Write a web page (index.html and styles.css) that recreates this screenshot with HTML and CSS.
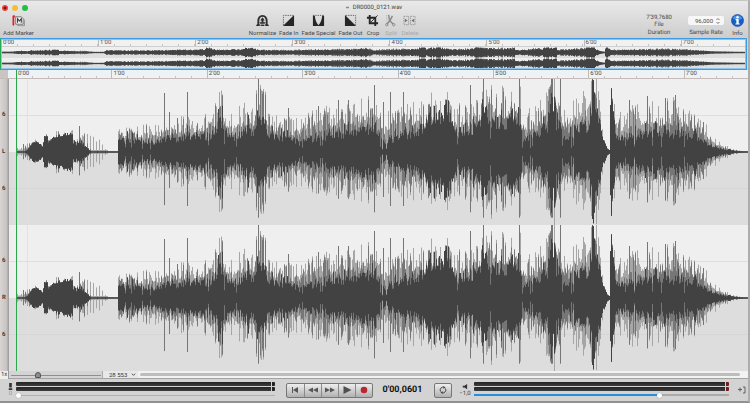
FILE: index.html
```html
<!DOCTYPE html>
<html lang="en">
<head>
<meta charset="utf-8">
<title>DR0000_0121.wav</title>
<link rel="stylesheet" href="styles.css">
</head>
<body>
<div class="window">
  <header class="header">
    <div class="titlebar">
      <div class="lights">
        <button class="light close" aria-label="Close"></button>
        <button class="light minimise" aria-label="Minimise"></button>
        <button class="light expand" aria-label="Zoom"></button>
      </div>
      <h1 class="title"><svg class="doc" viewBox="0 0 4 4"><path d="M0 1h4v2H0z" fill="#888"/></svg>DR0000_0121.wav</h1>
    </div>
    <div class="toolbar">
      <button class="tool">
        <svg viewBox="0 0 14 14"><path d="M4 3h6l2 2v6H4z" fill="#f2f2f2" stroke="#555" stroke-width=".8"/><path d="M5.500 12.500h8V6" fill="none" stroke="#777" stroke-width=".7"/><path d="M6 9.500V5l2 2.500L10 5v4.500" fill="none" stroke="#333" stroke-width="1.100"/><path d="M1 2h2v1H2v9H1z" fill="#d81e2a" stroke="#d81e2a" stroke-width=".8"/></svg>
        <span>Add Marker</span>
      </button>
      <div class="space"></div>
      <div class="tools">
        <button class="tool"><svg viewBox="0 0 14 14"><path d="M2.500 13V8C2.500 4 4.500 2 7 2s4.500 2 4.500 6v5" fill="none" stroke="#2e2e2e" stroke-width="2" /><path d="M1 11h3v2H0zM10 11h3l1 2h-4z" fill="#2e2e2e"/><path d="M7 3.500 9.500 7H8v2h2.500L9 11v2H5v-2L3.500 9H6V7H4.500z" fill="#2e2e2e"/><path d="M4.500 11h5" stroke="#e5e5e5" stroke-width=".8"/></svg><span>Normalize</span></button>
        <button class="tool"><svg viewBox="0 0 14 14"><path d="M1.500 12V1.500H12" fill="none" stroke="#555" stroke-width=".9" stroke-dasharray="1.500 1"/><path d="M13 1v12H1z" fill="#262626"/></svg><span>Fade In</span></button>
        <button class="tool"><svg viewBox="0 0 14 14"><path d="M1 1.500h12" stroke="#555" stroke-width=".9" stroke-dasharray="1.500 1"/><path d="M1 2h2c.5 5 2 8 4 10 2-2 3.500-5 4-10h2v11H1z" fill="#262626"/></svg><span>Fade Special</span></button>
        <button class="tool"><svg viewBox="0 0 14 14"><path d="M2 1.500h10.500V12" fill="none" stroke="#555" stroke-width=".9" stroke-dasharray="1.500 1"/><path d="M1 1l12 12H1z" fill="#262626"/></svg><span>Fade Out</span></button>
        <button class="tool"><svg viewBox="0 0 14 14"><path d="M4 1v9h9M1 4h9v9" fill="none" stroke="#262626" stroke-width="2"/><path d="M4.500 9.500l8-8" stroke="#262626" stroke-width="1"/></svg><span>Crop</span></button>
        <button class="tool" disabled><svg viewBox="0 0 14 14"><path d="M5 1l1 6 4 4M9 2L6.500 7 3 11" fill="none" stroke="#777" stroke-width="1.600"/><circle cx="3" cy="11.500" r="1.300" fill="none" stroke="#777"/><circle cx="10.500" cy="11.500" r="1.300" fill="none" stroke="#777"/><path d="M3 1v8" stroke="#999" stroke-width=".8" stroke-dasharray="1 1"/></svg><span>Split</span></button>
        <button class="tool" disabled><svg viewBox="0 0 14 14"><path d="M1 2.500h5v9H1zM8 2.500h5v9H8z" fill="none" stroke="#777" stroke-width=".9" stroke-dasharray="1.500 1"/><path d="M2 5l3 2-3 2zM12 5L9 7l3 2z" fill="#555"/></svg><span>Delete</span></button>
      </div>
      <div class="space wide"></div>
      <div class="tool"><div class="duration">7'39,7680<br>File</div><span>Duration</span></div>
      <div class="tool rate">
        <div class="field"><select id="rate"><option>96,000</option></select><svg class="step" viewBox="0 0 6 8"><path d="M1.500 3 3 1.500 4.500 3M1.500 5 3 6.500 4.500 5" fill="none" stroke="#555" stroke-width=".8"/></svg></div>
        <label for="rate">Sample Rate</label>
      </div>
      <button class="tool"><svg viewBox="0 0 14 14"><circle cx="7" cy="7" r="6.500" fill="#165fc4" stroke="#0a3d91" stroke-width=".6"/><path d="M2 5a5.300 5.300 0 0 1 10 0q-5 2-10 0z" fill="#4c92e2"/><circle cx="7" cy="3.500" r="1.300" fill="#fff"/><path d="M5 5.500h3.300v4.700h1v1.100H4.800v-1.100h1V6.600H5z" fill="#fff"/></svg><span>Info</span></button>
    </div>
  </header>

  <section class="overview" aria-label="Overview">
    <div class="ruler" data-ruler></div>
    <svg class="mini" data-mini viewBox="0 0 745 11" preserveAspectRatio="none"></svg>
    <svg class="mini" data-mini viewBox="0 0 745 11" preserveAspectRatio="none"></svg>
  </section>

  <main class="editor">
    <div class="ruler main-ruler" data-ruler></div>
    <div class="lane"><div class="scale"><span>6</span><span>L</span><span>6</span></div><svg data-wave viewBox="9 0 739 146" preserveAspectRatio="none"></svg></div>
    <div class="lane"><div class="scale"><span>6</span><span>R</span><span>6</span></div><svg data-wave viewBox="9 0 739 146" preserveAspectRatio="none"></svg></div>
    <div class="playhead"></div>
  </main>

  <div class="zoombar">
    <span class="factor">1x</span>
    <input class="zoom" type="range" min="0" max="100" value="29" aria-label="Zoom">
    <div class="samples"><select aria-label="Samples per pixel"><option>28 553</option></select><svg viewBox="0 0 6 6"><path d="M1 2l2 2 2-2" fill="none" stroke="#333"/></svg></div>
    <div class="scroll"><div class="bar"></div></div>
  </div>

  <footer class="transport">
    <div class="side"><svg viewBox="0 0 8 8"><path d="M2.500 0h3v5h-3zM2 6h4v2H2z" fill="#333"/></svg><span class="level dim">0</span></div>
    <div class="levels input">
      <div class="meter"></div><div class="meter"></div>
      <input class="gain" type="range" min="0" max="100" value="0" aria-label="Input gain">
    </div>
    <div class="buttons">
      <button aria-label="Return to start"><svg viewBox="0 0 12 8"><path d="M3 1h1v6H3zM9 1v6L4 4z" fill="#555"/></svg></button>
      <button aria-label="Rewind"><svg viewBox="0 0 12 8"><path d="M6 1.500v5L1 4zM11 1.500v5L6 4z" fill="#555"/></svg></button>
      <button aria-label="Forward"><svg viewBox="0 0 12 8"><path d="M1 1.500v5L6 4zM6 1.500v5L11 4z" fill="#555"/></svg></button>
      <button aria-label="Play"><svg viewBox="0 0 12 8"><path d="M2.500 0v8l8-4z" fill="#505050"/></svg></button>
      <button aria-label="Record"><svg viewBox="0 0 12 8"><circle cx="6" cy="4" r="3.300" fill="#b92831"/></svg></button>
    </div>
    <output class="clock">0'00,0601</output>
    <div class="buttons loop"><button aria-label="Loop"><svg viewBox="0 0 12 8"><path d="M3.500 5.500A3 3 0 0 1 7 1.200M8.500 2.500A3 3 0 0 1 5 6.800" fill="none" stroke="#444"/><path d="M6.500 0l2 1.400-2 1.500zM5.500 8l-2-1.400 2-1.500z" fill="#444"/></svg></button></div>
    <div class="side out"><svg viewBox="0 0 8 8"><path d="M2 3h2l3-2v6L4 5H2z" fill="#333"/></svg><span class="level">−1,0</span></div>
    <div class="levels output">
      <div class="meter"></div><div class="meter"></div>
      <input class="gain volume" type="range" min="0" max="100" value="73" aria-label="Output volume">
    </div>
    <svg class="follow" viewBox="0 0 8 8"><path d="M0 3.500h4M2 1.500v4M5 1h2v6H5" fill="none" stroke="#555" stroke-width=".9"/></svg>
  </footer>
</div>
<script src="wave.js"></script>
</body>
</html>
```
FILE: styles.css
```css
* { box-sizing: border-box; }

body {
  margin: 0;
  font: 6px/8px Roboto, "Liberation Sans", sans-serif;
  text-rendering: geometricPrecision;
  color: #3c3c3c;
  background: #999;
}

button, select, input { margin: 0; padding: 0; border: 0; font: inherit; color: inherit; background: none; appearance: none; }
svg { display: block; }

.window {
  display: flex;
  flex-direction: column;
  min-height: 100vh;
  background: #d6d6d6;
  border-top: 1px solid #c6c6c6;
  border-right: 2px solid #adadad;
  border-bottom: 2px solid #919191;
}

.header { background: linear-gradient(#e9e9e9, #cdcdcd); }

.titlebar { display: grid; grid-template-columns: 1fr auto 1fr; align-items: center; height: 13px; padding: 0 2px; }
.lights { display: flex; gap: 4px; }
.light { width: 6px; height: 6px; border-radius: 50%; }
.close { background: radial-gradient(#85140e 0 1px, #f0483e 2px); }
.minimise { background: #f6bd3b; }
.expand { background: #21bf45; }
.title { display: flex; align-items: center; gap: 4px; margin: 0; font-size: 6px; font-weight: 400; }
.doc { width: 3px; height: 3px; }

.toolbar { display: flex; align-items: flex-start; padding: 0 3px 1px; }
.tools { display: flex; gap: 3px; }
.space { flex: 50; }
.wide { flex: 53; }
.tool { display: flex; flex-direction: column; align-items: center; gap: 2px; min-width: 15px; color: #484848; white-space: nowrap; }
.tool > svg { width: 13px; height: 13px; }
.tool:disabled { color: #a2a2a2; opacity: .8; }
.duration { height: 13px; line-height: 7px; text-align: center; }
.rate { margin: 0 6px 0 16px; }
.field { display: flex; align-items: center; height: 9px; margin: 2px 0; padding: 0 3px 0 7px; background: #f7f7f7; border-radius: 2px; }
.field select { width: 20px; }
.step { width: 6px; height: 8px; }

.overview { margin-right: 1px; background: #ececec; border: 1px solid #3d9be3; border-left: 1px solid #27ad55; outline: 1px solid #8cc4ee; outline-offset: -2px; }
.overview .ruler { color: #555; }
.mini { width: 100%; height: 11px; background: linear-gradient(#efefef 50%, #dedede 50%); }

.ruler { display: flex; height: 8px; line-height: 7px; color: #4a4a4a; background: #f1f1f1; border-bottom: 1px solid #cfcfcf; }
.minute {
  flex: 60 1 0;
  min-width: 0;
  padding-left: 1px;
  border-left: 1px solid #bbb;
  background: repeating-linear-gradient(90deg, transparent 0 15px, #c4c4c4 15px 16px) 0 100% / 100% 2px no-repeat;
}
.minute:last-child { flex-grow: 40; }

.editor { position: relative; display: flex; flex: 1; flex-direction: column; }
.main-ruler { height: 9px; padding-left: 16px; background: linear-gradient(90deg, #c9c5c5 0 8px, #eef2f5 8px); border-bottom-color: #c5bcb9; }
.lane { display: grid; flex: 1; grid-template-columns: 9px 1fr; min-height: 60px; }
.lane svg { width: 100%; height: 100%; min-height: 0; }
.scale { display: grid; grid-template-rows: repeat(3, 1fr); align-items: center; padding: 18px 0 18px 2px; font-size: 6px; font-weight: 700; background: linear-gradient(90deg, #dad5d5, #c8c4c4 70%, #999); }
.playhead { position: absolute; top: 0; bottom: 0; left: 16px; width: 1px; background: #27a84c; }

.core { stroke: #424242; }
.mid { stroke: #767676; }
.peak { stroke: #a6a6a6; }
.core, .mid, .peak { fill: none; stroke-width: 1; }
.mini .mid { stroke: #666; }

.zoombar { display: flex; align-items: center; height: 8px; color: #333; background: #d4d4d4; border-bottom: 1px solid #a3a3a3; }
.factor { width: 9px; padding-left: 1px; font-size: 6px; background: #eee; border-right: 1px solid #999; }
.zoom { width: 94px; height: 7px; padding: 0 2px; background: linear-gradient(#8e8e8e, #8e8e8e) 2px 4px / 90px 1px no-repeat; border-right: 1px solid #aaa; }
.zoom::-webkit-slider-thumb { appearance: none; width: 6px; height: 6px; background: #8c8c8c; border: 1px solid #555; border-radius: 3px 3px 1px 1px; }
.samples { display: flex; align-items: center; width: 35px; height: 7px; padding: 0 2px 0 6px; background: #e8e8e8; }
.samples select { width: 22px; line-height: 7px; }
.samples svg { width: 5px; height: 5px; }
.scroll { flex: 1; padding: 2px 8px 2px 2px; background: #f2f2f2; }
.bar { height: 3px; background: #bdbdbd; border-radius: 2px; }

.transport { display: flex; align-items: center; height: 22px; padding: 0 2px 0 5px; background: #d3d3d3; }
.side { display: flex; flex-direction: column; align-items: center; width: 11px; }
.side svg { width: 7px; height: 7px; }
.level { line-height: 8px; white-space: nowrap; }
.dim { color: #999; }
.levels { flex: 259 1 0; }
.output { flex-grow: 255; }
.meter {
  height: 4px;
  margin-bottom: 1px;
  border-radius: 1px;
  background:
    linear-gradient(90deg, #d3d3d3 0 1px, #242424 1px 4px) 100% 0 / 4px 4px no-repeat,
    linear-gradient(#242424, #3c3c3c);
}
.output .meter {
  background:
    linear-gradient(90deg, #d3d3d3 0 1px, #731d20 1px 4px) 100% 0 / 4px 4px no-repeat,
    linear-gradient(#242424, #3c3c3c);
}
.gain { display: block; width: 100%; height: 6px; background: linear-gradient(#b0b0b0, #b0b0b0) 0 3px / 100% 1px no-repeat; }
.gain::-webkit-slider-thumb { appearance: none; width: 5px; height: 5px; background: #fff; border-radius: 50%; box-shadow: 0 0 1px #777; }
.volume { background: linear-gradient(90deg, #298ede 73%, #aaa 73%) 0 2px / 100% 2px no-repeat; }
.buttons { display: flex; margin: 0 10px 0 11px; border: 1px solid #777; border-radius: 2px; background: linear-gradient(#eee, #b0b0b0); }
.buttons button { width: 17px; height: 13px; display: grid; place-items: center; }
.buttons button + button { border-left: 1px solid #8a8a8a; }
.buttons svg { width: 12px; height: 8px; }
.loop { margin: 0 7px 0 12px; }
.loop button { width: 16px; }
.clock { font-size: 9px; font-weight: 700; color: #111; }
.out { margin-right: 4px; }
.follow { width: 8px; height: 8px; margin-left: 9px; }
```
FILE: wave.js
```js
// Envelope of the recording: x, body half-height, peak half-height (lane half = 73).
const envelope = [
  [16,.6,4],[24,.8,5],[27,2,8],[32,9,11],[37,11,12],[42,6,9],[43,9,12],[44,16,20],[47,15,19],[48,9,13],[52,14,18],
  [60,17,22],[66,18,23],[72,20,24],[73,9,12],[76,9,15],[80,12,19],[84,6,19],[88,3,19],[91,.7,20],[97,.7,20],[103,.7,8],
  [107,.6,1],[117,.6,.6],[118,14,24],[140,11,26],[160,11,28],[180,14,33],[190,18,38],[205,17,38],[215,20,46],
  [218,40,60],[221,36,60],[224,22,48],[232,16,36],[240,18,44],[245,26,48],[253,19,40],[257,42,70],[259,38,68],[265,34,60],
  [268,18,36],[285,14,34],[300,12,32],[312,14,40],[330,18,46],[345,19,48],[360,22,50],[373,28,64],[378,24,50],
  [382,10,32],[390,13,45],[400,16,52],[415,22,50],[425,28,48],[428,48,69],[430,46,68],[433,30,50],[445,48,70],
  [448,46,66],[452,29,48],[458,21,48],[470,24,52],[480,28,54],[483,55,73],[486,42,68],[492,32,62],[500,31,62],
  [516,31,66],[520,30,73],[522,15,34],[530,16,42],[540,23,56],[548,27,60],[551,60,73],[554,58,73],[555,32,60],
  [559,36,73],[561,35,70],[563,15,38],[573,18,48],[579,26,62],[589,30,62],[592,66,73],[594,64,73],[597,50,73],
  [600,28,42],[602,16,22],[605,8,10],[607,3,4],[609,2,2],[610,66,73],[612,60,73],[613,28,48],[616,16,40],[630,17,44],
  [650,20,48],[665,20,52],[680,19,50],[690,18,44],[700,13,34],[706,10,26],[712,6,15],[720,3,9],[730,2,4],[738,1,1.5],[748,.6,.6]
];
const spikes = { 23: 8, 79: 26, 164: 59, 169: 40, 177: 34, 187: 60, 258: 73, 288: 44, 318: 46, 338: 52, 348: 52, 374: 67, 383: 50, 390: 60, 403: 60, 470: 67, 483: 73, 519: 73, 551: 73, 552: 73, 560: 73, 629: 52, 647: 56, 665: 54, 675: 57, 703: 30 };
// Quiet instants, where the body of the wave thins out.
const dips = [125, 131, 142, 150, 208, 224, 236, 299, 302, 320, 322, 380, 382, 386, 457, 490, 522, 530, 532, 562, 571, 573, 625, 634, 652, 661, 684];

function at(x, k) {
  let i = 1;
  while (i < envelope.length - 1 && envelope[i][0] < x) i++;
  const a = envelope[i - 1], b = envelope[i];
  const t = Math.min(1, Math.max(0, (x - a[0]) / (b[0] - a[0])));
  return a[k] + (b[k] - a[k]) * t;
}

function generator(seed) {
  return () => (seed = (seed * 16807) % 2147483647) / 2147483647;
}

const strokes = (d, name) => `<path class="${name}" d="${d}"/>`;
const column = (x, mid, up, down) => `M${x + .5} ${(mid - up).toFixed(1)}V${(mid + down).toFixed(1)}`;

document.querySelectorAll('[data-wave]').forEach((svg) => {
  const rnd = generator(4711);
  let core = '', mid = '', peak = '';
  for (let x = 16; x < 748; x++) {
    const c = at(x, 1), p = at(x, 2);
    const solid = x < 74 || (x > 598 && x < 610);
    const sparse = x > 83 && x < 108;
    const dip = dips.includes(x) ? .35 : 1;
    const burst = c < 35 && rnd() < .22 ? 1.4 : 1;
    const body = solid ? c * (.88 + rnd() * .2) : c * (.66 + rnd() * .5) * dip * burst;
    const tall = rnd() < .36;
    const reach = tall ? .78 + rnd() * .3 : .5 + rnd() * .27;
    const top = Math.max(body, sparse && x % 3 ? 2 : p * reach);
    const m = body + (top - body) * (rnd() < .3 ? .9 : rnd() * .5);
    const lean = .86 + rnd() * .18;
    peak += column(x, 73, Math.min(73, top), Math.min(73, top * lean));
    if (c > .8) mid += column(x, 73, Math.min(73, m), Math.min(73, m * lean));
    core += column(x, 73, Math.max(.8, Math.min(73, body)), Math.max(.8, Math.min(73, body * lean)));
    if (spikes[x]) mid += column(x, 73, spikes[x], spikes[x] * .9);
  }
  svg.innerHTML = '<rect x="9" width="739" height="73" fill="#efefef"/><rect x="9" y="73" width="739" height="73" fill="#dddddd"/>' +
    '<path d="M9 36.500H748M9 109.500H748" stroke="#d2d2d2" stroke-width=".6"/><path d="M27.500 0V146" stroke="#efd9d9" stroke-width=".8"/>' +
    strokes(peak, 'peak') + strokes(mid, 'mid') + strokes(core, 'core');
});

document.querySelectorAll('[data-mini]').forEach((svg) => {
  const rnd = generator(97);
  let core = '', mid = '';
  for (let x = 0; x < 745; x++) {
    const source = 16 + x * 732 / 745;
    const h = .6 + at(source, 1) * .09 * (.7 + rnd() * .7);
    const m = .5 + at(source, 2) * .07 * (.5 + rnd() * .5);
    core += column(x, 5.500, Math.min(5, h), Math.min(5, h));
    mid += column(x, 5.500, Math.min(5, m), Math.min(5, m));
  }
  svg.innerHTML = strokes(mid, 'mid') + strokes(core, 'core');
});

document.querySelectorAll('[data-ruler]').forEach((ruler) => {
  for (let m = 0; m < 8; m++) {
    const cell = document.createElement('div');
    cell.className = 'minute';
    cell.textContent = `${m}'00`;
    ruler.append(cell);
  }
});
```
